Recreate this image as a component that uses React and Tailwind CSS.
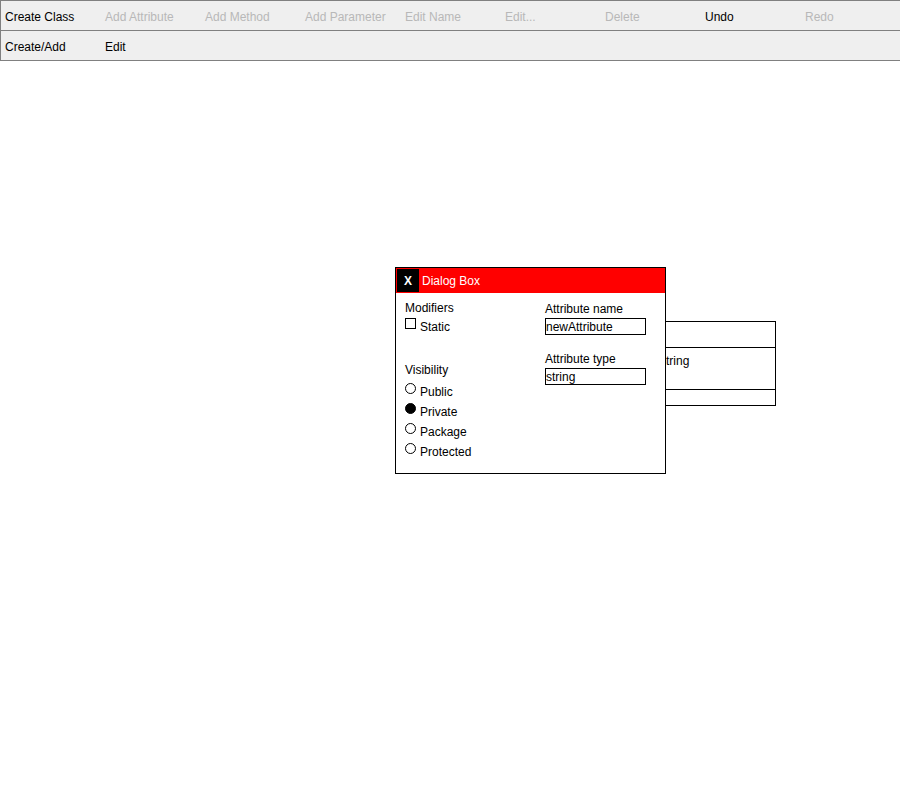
const toolbarTop = [
  { label: "Create Class", enabled: true },
  { label: "Add Attribute", enabled: false },
  { label: "Add Method", enabled: false },
  { label: "Add Parameter", enabled: false },
  { label: "Edit Name", enabled: false },
  { label: "Edit...", enabled: false },
  { label: "Delete", enabled: false },
  { label: "Undo", enabled: true },
  { label: "Redo", enabled: false },
];

const tabs = ["Create/Add", "Edit"];

const visibility = [
  { label: "Public", checked: false },
  { label: "Private", checked: true },
  { label: "Package", checked: false },
  { label: "Protected", checked: false },
];

const ToolButton = ({ label, enabled = true }) => (
  <div
    className={`w-[100px] shrink-0 pl-[4px] pt-[2px] flex items-center ${
      enabled ? "text-black" : "text-[#b8b8b8]"
    }`}
  >
    {label}
  </div>
);

const Radio = ({ label, checked }) => (
  <div className="h-[20px] flex items-start">
    <span
      className={`w-[11px] h-[11px] rounded-full border border-black shrink-0 ${
        checked ? "bg-black" : "bg-white"
      }`}
    />
    <span className="ml-[4px] mt-[2px]">{label}</span>
  </div>
);

const DialogBox = () => (
  <div className="absolute left-[395px] top-[206px] z-10 w-[271px] h-[207px] border border-black bg-white">
    {/* title bar */}
    <div className="h-[25px] bg-[#ff0000] p-[1px] flex items-start">
      <div className="w-[22px] h-[23px] bg-black text-white font-bold flex items-center justify-center">
        X
      </div>
      <div className="ml-[3px] h-[23px] flex items-center text-white">Dialog Box</div>
    </div>

    <div className="grid grid-cols-[140px_1fr] pl-[9px] pt-[8px]">
      <div className="flex flex-col">
        <div>Modifiers</div>
        <div className="h-[16px] mt-[3px] flex items-start">
          <span className="w-[11px] h-[11px] border border-black bg-white shrink-0" />
          <span className="ml-[4px] mt-[2px]">Static</span>
        </div>

        <div className="mt-[29px]">Visibility</div>
        <div className="mt-[6px] flex flex-col">
          {visibility.map((v) => (
            <Radio key={v.label} label={v.label} checked={v.checked} />
          ))}
        </div>
      </div>

      <div className="flex flex-col mt-[1px]">
        <div>Attribute name</div>
        <div className="mt-[2px] w-[101px] h-[17px] border border-black flex items-center">
          newAttribute
        </div>
        <div className="mt-[17px]">Attribute type</div>
        <div className="mt-[2px] w-[101px] h-[17px] border border-black flex items-center">
          string
        </div>
      </div>
    </div>
  </div>
);

// class node on the canvas, mostly hidden behind the dialog
const ClassNode = () => (
  <div className="absolute left-[575px] top-[260px] w-[201px] border border-black bg-white flex flex-col">
    <div className="h-[26px] border-b border-black" />
    <div className="h-[42px] border-b border-black pl-[84px] pt-[6px]">string</div>
    <div className="h-[15px]" />
  </div>
);

export default function App() {
  return (
    <div
      className="w-[900px] h-[800px] bg-white flex flex-col overflow-hidden text-[12px] leading-[14px] text-black"
      style={{ fontFamily: '"Liberation Sans", Arial, sans-serif' }}
    >
      <div className="border-t border-l border-b border-[#808080] bg-[#efefef] shrink-0">
        <div className="h-[30px] flex border-b border-[#808080]">
          {toolbarTop.map((b) => (
            <ToolButton key={b.label} label={b.label} enabled={b.enabled} />
          ))}
        </div>
        <div className="h-[29px] flex">
          {tabs.map((t) => (
            <ToolButton key={t} label={t} />
          ))}
        </div>
      </div>

      <div className="relative flex-1">
        <ClassNode />
        <DialogBox />
      </div>
    </div>
  );
}
